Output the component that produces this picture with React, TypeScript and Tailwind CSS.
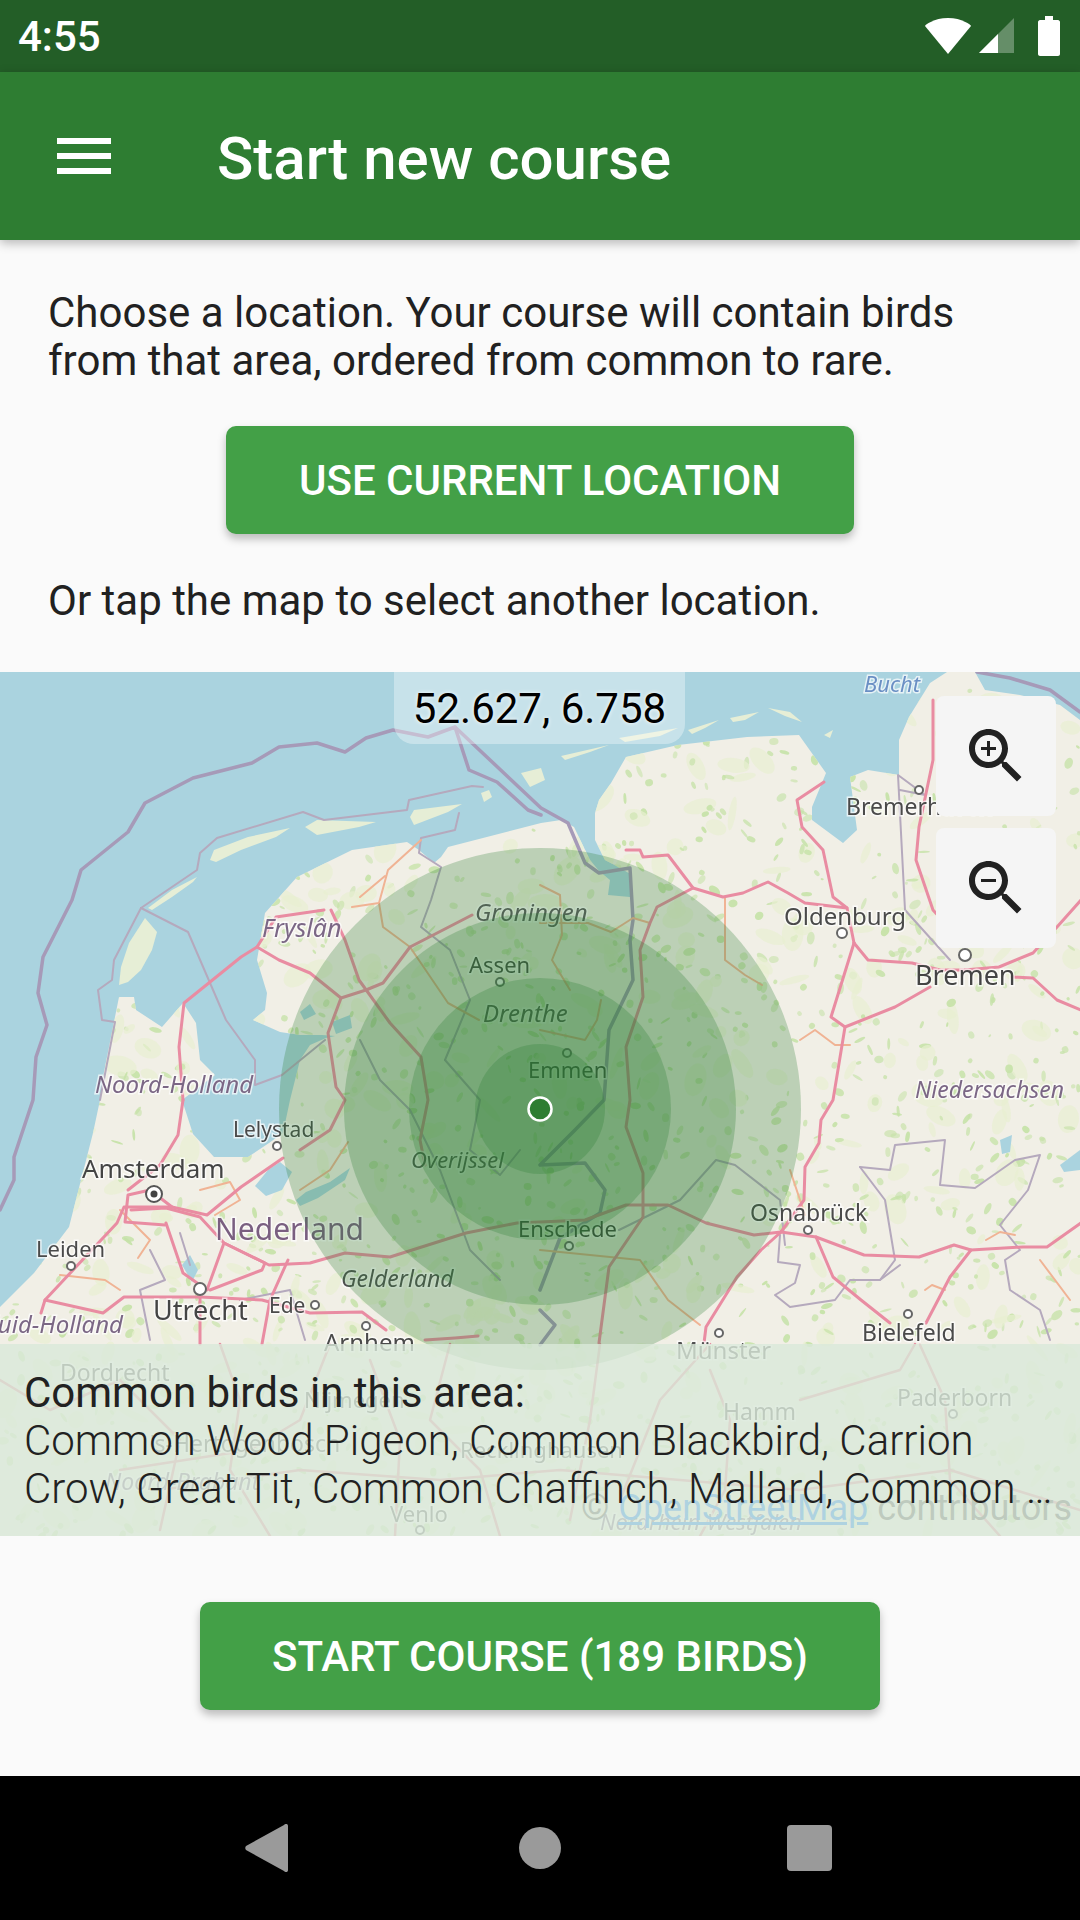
import type { ReactNode } from 'react'

// OSM-ish base map, all coords are page pixels (viewBox starts at the map's top)
const LAND =
  '0,1307 34,1273 69,1227 93,1133 100,1100 103,1077 119,997 134,997 136,1010 162,1027 183,1003 196,1023 200,1060 215,1075 182,1100 193,1134 214,1157 248,1157 269,1143 283,1133 290,1100 300,1060 310,1045 326,1038 335,1036 322,1035 300,1035 280,1032 253,1020 265,1010 267,993 257,960 265,913 297,877 352,850 407,842 419,850 434,863 441,857 448,847 541,823 561,820 574,827 590,860 600,872 610,880 608,895 630,897 632,875 620,868 605,860 595,840 595,813 599,800 611,783 626,757 678,745 747,737 799,735 826,773 812,807 812,820 843,843 857,830 850,777 868,770 899,775 899,740 909,717 930,683 947,672 975,672 985,690 1020,695 1060,705 1080,720 1080,1536 0,1536'

const ISLANDS = [
  '119,985 121,967 129,943 145,918 157,932 152,950 141,970 128,982',
  '148,908 172,890 197,877 193,882 172,897 152,910',
  '210,860 214,850 248,837 290,828 276,837 241,850 216,862',
  '305,827 317,820 376,822 359,827 317,835',
  '410,817 414,810 462,804 448,812 414,825',
  '481,793 489,790 492,797 484,802',
  '521,773 541,768 545,780 530,787',
  '561,756 609,745 590,752 565,760',
  '619,738 678,728 660,736 625,742',
  '688,730 719,720 705,728 692,734',
  '730,718 759,712 745,720 733,722',
  '768,708 790,712 802,722 785,716',
  '824,735 833,730 830,738',
]

const WATER = [
  '268,1170 280,1162 292,1172 282,1190 266,1196 255,1186',
  '296,1200 306,1192 330,1182 350,1168 345,1180 318,1198 300,1206',
  '182,1265 190,1255 198,1270 192,1282',
  '1000,1140 1012,1135 1010,1152 1002,1154',
  '1060,1165 1080,1150 1080,1170 1064,1172',
  '332,1022 350,1015 352,1028 336,1034',
  '300,1012 310,1004 316,1014 304,1020',
]

const MOTORWAYS = [
  '183,1100 179,1047 184,1003 241,957 257,947 279,960 310,973 341,998 366,990 383,983 410,947 472,915',
  '257,947 276,917 324,910',
  '331,910 345,940 359,980 390,1023 421,1057 428,1100 420,1140 425,1165',
  '341,998 328,1033 336,1087 345,1100 330,1130 300,1150',
  '626,850 640,850 643,857 668,855 693,888 723,897 743,893 768,882 788,893 805,903 847,908 854,943',
  '693,888 657,907 650,923 640,950 643,997 626,1047 630,1100 626,1127 643,1173 643,1217 609,1267 599,1343',
  '824,782 797,800 802,827 823,850 833,897 847,908',
  '854,943 868,960 912,963 940,970 964,970 999,967 1033,953 1057,927 1081,900',
  '854,943 831,1017 845,1027 895,1007 930,987',
  '845,1027 833,1100 821,1120 819,1143 805,1167 804,1200 781,1232 761,1250 737,1277 706,1327 704,1343',
  '933,700 933,760 919,827 916,860 933,910 965,945',
  '1012,977 1033,978 1057,1000 1081,1010',
  '781,1232 754,1235 706,1223 668,1205 626,1205 585,1220 517,1223 466,1233 390,1257 345,1253 310,1263 269,1265 224,1243 200,1217 166,1208 131,1210',
  '781,1232 816,1237 864,1255 919,1257 954,1245 971,1250 1023,1247 1047,1247 1081,1223',
  '816,1237 833,1277 861,1300 890,1323',
  '971,1250 950,1277 926,1323',
  '283,1158 241,1187 207,1215 172,1207 124,1207 117,1223 45,1300 41,1313',
  '166,1223 183,1273 207,1290 224,1243 265,1263 262,1270 210,1290',
  '45,1300 103,1313 124,1297 200,1297 262,1300 310,1313 362,1312 386,1330',
  '200,1297 200,1344',
  '183,1100 178,1135 160,1165 128,1190',
  '172,1207 150,1190 128,1195 125,1222 165,1225',
  '288,1260 270,1300 262,1344',
  '425,1340 455,1338 478,1336',
]

const PRIMARY = [
  '352,907 379,903 388,870 421,840',
  '379,903 383,927 410,947 448,1003 479,1020',
  '360,897 385,876',
  '540,923 588,923 611,932 633,918 650,923',
  '540,885 560,895 562,935 552,960 570,990',
  '725,897 725,960 745,975 762,985',
  '540,1030 585,1040 597,1020 601,1000',
  '800,1040 815,1030 835,1045 850,1045',
  '300,1190 330,1170 348,1142',
  '120,1210 150,1240 138,1258',
  '200,1190 230,1182 240,1200 215,1215',
  '60,1275 105,1280 120,1290',
  '790,1170 800,1200 805,1215',
  '986,1240 1000,1232 1015,1235',
  '1040,1260 1070,1300',
  '925,1290 932,1285 945,1290',
  '540,1250 640,1260 668,1300 700,1325',
  '1012,830 1000,850 1000,870',
  '1000,830 1040,832',
]

const BORDERS_THICK = [
  '0,1210 14,1180 14,1157 33,1100 36,1057 47,1025 38,993 43,957 72,900 81,870 128,832 145,803 193,778 252,763 279,747 317,743 345,752 366,738 393,730 428,737 455,727 469,770 497,782 528,810 541,815',
  '455,727 541,808 568,823 585,863 599,873 630,868 633,920 630,940 633,980 609,1030 604,1100 575,1130 540,1165 585,1163 605,1190 600,1213 560,1238 540,1290',
  '540,1310 555,1325 540,1345',
  '977,672 1010,678 1050,690 1080,712',
]

const BORDERS_THIN = [
  '141,908 188,932 226,1020 255,1060 255,1085 282,1075 325,1040',
  '141,908 114,960 112,980 98,990 102,1020 115,1022 100,1100',
  '141,908 197,870 200,853 217,838 303,812 324,820 407,810 409,800 472,786 483,787',
  '459,813 455,830 421,838 419,853 441,867 431,900 421,927 450,950 470,1000 445,1060',
  '445,1060 480,1100 470,1150 500,1175 520,1150',
  '360,1040 380,1080 410,1110 440,1170 470,1250 500,1280',
  '619,1230 680,1200 716,1160 735,1165 780,1200 785,1245',
  '780,1235 778,1262 800,1265 795,1283 775,1295 790,1307 835,1300 850,1280 880,1280 900,1265',
  '860,1167 890,1170 895,1145 945,1140 940,1185 975,1188 1015,1160 1040,1155 1028,1190 1000,1225 1020,1250 1005,1260 1010,1290 1040,1310 1050,1340',
  '860,1167 885,1200 895,1260 880,1280',
  '900,790 925,795 898,775 905,910 950,960',
  '150,1250 165,1280 140,1290 150,1340',
  '240,1300 290,1290 305,1340',
  '180,1233 190,1265',
]

// Everything under the translucent list panel
const FAINT_ROADS = [
  '0,1380 50,1410 120,1380 180,1440 160,1530',
  '220,1344 240,1400 230,1470 270,1536',
  '330,1344 300,1420 250,1450 120,1470',
  '370,1360 400,1440 395,1536',
  '450,1344 430,1420 480,1470 500,1536',
  '600,1344 590,1420 570,1520',
  '710,1344 660,1400 620,1500',
  '710,1370 730,1420 725,1490 700,1536',
  '800,1400 900,1370 915,1344',
  '920,1345 945,1400 950,1480 1000,1536',
  '160,1490 300,1470 440,1480 560,1470 800,1490 950,1470 1080,1510',
]

const LABELS: { t: string; x: number; y: number; s: number; c: string; i?: boolean; e?: boolean }[] = [
  { t: 'Bucht', x: 864, y: 692, s: 22, c: '#6a8fc4', i: true },
  { t: 'Fryslân', x: 262, y: 937, s: 25, c: '#7b6785', i: true },
  { t: 'Groningen', x: 475, y: 921, s: 24, c: '#5f5a60', i: true },
  { t: 'Assen', x: 469, y: 973, s: 22, c: '#454545' },
  { t: 'Drenthe', x: 483, y: 1022, s: 24, c: '#505050', i: true },
  { t: 'Emmen', x: 528, y: 1078, s: 22, c: '#3c3c3c' },
  { t: 'Noord-Holland', x: 95, y: 1093, s: 24, c: '#7b6785', i: true },
  { t: 'Lelystad', x: 233, y: 1137, s: 21, c: '#4a4a4a' },
  { t: 'Overijssel', x: 411, y: 1168, s: 22, c: '#505050', i: true },
  { t: 'Amsterdam', x: 82, y: 1178, s: 26, c: '#444444' },
  { t: 'Nederland', x: 215, y: 1240, s: 30, c: '#7a5f80' },
  { t: 'Enschede', x: 518, y: 1237, s: 22, c: '#3c3c3c' },
  { t: 'Leiden', x: 36, y: 1257, s: 22, c: '#4a4a4a' },
  { t: 'Gelderland', x: 341, y: 1287, s: 23, c: '#505050', i: true },
  { t: 'Zuid-Holland', x: 123, y: 1333, s: 24, c: '#7b6785', i: true, e: true },
  { t: 'Utrecht', x: 153, y: 1320, s: 27, c: '#444444' },
  { t: 'Ede', x: 269, y: 1313, s: 21, c: '#4a4a4a' },
  { t: 'Arnhem', x: 324, y: 1351, s: 24, c: '#4a4a4a' },
  { t: 'Oldenburg', x: 784, y: 925, s: 24, c: '#4a4a4a' },
  { t: 'Bremerhaven', x: 846, y: 815, s: 23, c: '#4a4a4a' },
  { t: 'Bremen', x: 915, y: 985, s: 27, c: '#444444' },
  { t: 'Niedersachsen', x: 915, y: 1098, s: 23, c: '#7b6785', i: true },
  { t: 'Osnabrück', x: 750, y: 1221, s: 23, c: '#4a4a4a' },
  { t: 'Bielefeld', x: 862, y: 1341, s: 23, c: '#4a4a4a' },
  { t: 'Münster', x: 676, y: 1359, s: 24, c: '#505050' },
  { t: 'Dordrecht', x: 60, y: 1381, s: 23, c: '#505050' },
  { t: 'Nijmegen', x: 304, y: 1408, s: 22, c: '#505050' },
  { t: "'s-Hertogenbosch", x: 150, y: 1452, s: 23, c: '#505050' },
  { t: 'Noord-Brabant', x: 105, y: 1490, s: 23, c: '#7b6785', i: true },
  { t: 'Venlo', x: 390, y: 1522, s: 22, c: '#505050' },
  { t: 'Hamm', x: 723, y: 1420, s: 23, c: '#505050' },
  { t: 'Paderborn', x: 897, y: 1406, s: 23, c: '#505050' },
  { t: 'Recklinghausen', x: 460, y: 1458, s: 22, c: '#505050' },
  { t: 'Nordrhein-Westfalen', x: 600, y: 1530, s: 22, c: '#7b6785', i: true },
]

const PLACES: [number, number, number][] = [
  [500, 982, 4], [567, 1053, 4], [842, 933, 5], [919, 790, 4], [965, 955, 6], [277, 1146, 4], [71, 1266, 4],
  [200, 1289, 6], [315, 1305, 4], [366, 1326, 4], [569, 1246, 4], [808, 1230, 4], [719, 1333, 4], [908, 1314, 4],
  [953, 1414, 4], [420, 1530, 4],
]

// fixed seed, the mottled farmland/forest patches only need to look scattered
function makePatches() {
  let seed = 1337
  const rnd = () => {
    seed = (seed * 16807) % 2147483647
    return seed / 2147483647
  }
  const out: { x: number; y: number; rx: number; ry: number; a: number; c: string; o: number }[] = []
  for (let i = 0; i < 2200; i++) {
    const small = i % 4 !== 0
    out.push({
      x: rnd() * 1080,
      y: 680 + rnd() * 856,
      rx: small ? 1.5 + rnd() * 5 : 5 + rnd() * 12,
      ry: small ? 1 + rnd() * 3 : 3 + rnd() * 8,
      a: rnd() * 180,
      c: small ? '#c6e2a8' : '#e8f0d2',
      o: small ? 0.55 + rnd() * 0.4 : 0.7,
    })
  }
  return out
}

function MapArt() {
  const patches = makePatches()
  return (
    <svg className="absolute inset-0 h-full w-full blur-[0.7px]" viewBox="0 672 1080 864">
      <defs>
        <clipPath id="land">
          <polygon points={LAND} />
        </clipPath>
      </defs>
      <rect x="0" y="672" width="1080" height="864" fill="#aad3df" />
      <polygon points={LAND} fill="#f1efe6" />
      {ISLANDS.map(p => (
        <polygon key={p} points={p} fill="#e6eed6" />
      ))}
      <g clipPath="url(#land)">
        {patches.map((p, i) => (
          <ellipse
            key={i}
            cx={p.x}
            cy={p.y}
            rx={p.rx}
            ry={p.ry}
            fill={p.c}
            opacity={p.o}
            transform={`rotate(${p.a} ${p.x} ${p.y})`}
          />
        ))}
      </g>
      {WATER.map(p => (
        <polygon key={p} points={p} fill="#aad3df" />
      ))}
      <g fill="none" strokeLinejoin="round" strokeLinecap="round">
        {BORDERS_THIN.map(p => (
          <polyline key={p} points={p} stroke="#b5a9bd" strokeWidth="2" />
        ))}
        {BORDERS_THICK.map(p => (
          <polyline key={p} points={p} stroke="#a69ab8" strokeWidth="3.5" />
        ))}
        {PRIMARY.map(p => (
          <polyline key={p} points={p} stroke="#f0b394" strokeWidth="2" />
        ))}
        {MOTORWAYS.map(p => (
          <polyline key={p} points={p} stroke="#e98ca2" strokeWidth="3" />
        ))}
        {FAINT_ROADS.map(p => (
          <polyline key={p} points={p} stroke="#e58fa0" strokeWidth="2.5" />
        ))}
      </g>
      {PLACES.map(([x, y, r]) => (
        <circle key={`${x}-${y}`} cx={x} cy={y} r={r} fill="#fff" stroke="#666" strokeWidth="2" />
      ))}
      <circle cx="154" cy="1194" r="8" fill="#fff" stroke="#555" strokeWidth="2" />
      <circle cx="154" cy="1194" r="3.5" fill="#444" />
      {LABELS.map(l => (
        <text
          key={l.t}
          x={l.x}
          y={l.y}
          fontSize={l.s}
          fontFamily="'Noto Sans', sans-serif"
          fontStyle={l.i ? 'italic' : 'normal'}
          textAnchor={l.e ? 'end' : 'start'}
          fill={l.c}
          stroke="#ffffff"
          strokeOpacity="0.7"
          strokeWidth="3"
          paintOrder="stroke"
        >
          {l.t}
        </text>
      ))}
      <g fill="#2e7d32" fillOpacity="0.27">
        <circle cx="540" cy="1109" r="261" />
        <circle cx="540" cy="1109" r="196" />
        <circle cx="540" cy="1109" r="131" />
        <circle cx="540" cy="1109" r="65" />
      </g>
      <circle cx="540" cy="1109" r="11.5" fill="#2e7d32" stroke="#ffffff" strokeWidth="2.5" />
    </svg>
  )
}

function ZoomButton({ children }: { children: ReactNode }) {
  return (
    <button className="flex h-[120px] w-[120px] items-center justify-center rounded-[8px] bg-[#f5f5f5]">
      <svg width="72" height="72" viewBox="0 0 24 24" fill="#212121">
        <path d="M15.5 14h-.79l-.28-.27C15.41 12.59 16 11.11 16 9.5 16 5.91 13.09 3 9.5 3S3 5.91 3 9.5 5.91 16 9.5 16c1.61 0 3.09-.59 4.23-1.57l.27.28v.79l5 4.99L20.49 19l-4.99-5zm-6 0C7.01 14 5 11.99 5 9.5S7.01 5 9.5 5 14 7.01 14 9.5 11.99 14 9.5 14z" />
        {children}
      </svg>
    </button>
  )
}

function StatusBar() {
  return (
    <div className="flex h-[72px] items-center justify-between bg-[#235e27] pl-[18px] pr-[20px] text-white">
      <span className="pt-[2px] text-[42px] font-medium leading-none">4:55</span>
      <div className="flex items-center">
        <svg width="48" height="38" viewBox="0 0 48 38" fill="#fff">
          <path d="M24 37 1 9C1 8 10 1 24 1s23 7 23 8L24 37z" />
        </svg>
        <svg className="ml-[7px]" width="35" height="36" viewBox="0 0 35 36">
          <path d="M0 35 35 0v35z" fill="#fff" fillOpacity="0.3" />
          <path d="M0 35 19 16v19z" fill="#fff" />
        </svg>
        <svg className="ml-[24px]" width="22" height="40" viewBox="0 0 22 40" fill="#fff">
          <path d="M7 0h8v4h5c1 0 2 1 2 2v32c0 1-1 2-2 2H2c-1 0-2-1-2-2V6c0-1 1-2 2-2h5z" />
        </svg>
      </div>
    </div>
  )
}

function AppBar() {
  return (
    <div className="relative z-10 flex h-[168px] items-center bg-[#2e7d32] pl-[57px] shadow-[0_3px_10px_rgba(0,0,0,0.28)]">
      <svg width="54" height="36" viewBox="0 0 54 36" fill="#fff">
        <rect width="54" height="6" />
        <rect y="15" width="54" height="6" />
        <rect y="30" width="54" height="6" />
      </svg>
      <h1 className="ml-[106px] pt-[5px] text-[60px] font-medium leading-none text-white">Start new course</h1>
    </div>
  )
}

function GreenButton({ label, width }: { label: string; width: string }) {
  return (
    <button
      className={`flex h-[108px] items-center justify-center rounded-[10px] bg-[#43a047] text-[42px] font-medium text-white shadow-[0_5px_8px_rgba(0,0,0,0.25)] ${width}`}
    >
      {label}
    </button>
  )
}

function NavBar() {
  return (
    <div className="flex h-[144px] items-center bg-black pl-[245px]">
      <svg width="43" height="48" viewBox="0 0 43 48" fill="#9a9a9a">
        <path d="M39 1c2-2 4-1 4 1v44c0 2-2 3-4 1L1 26c-1-1-1-3 0-4L39 1z" />
      </svg>
      <div className="ml-[231px] h-[42px] w-[42px] rounded-full bg-[#9a9a9a]" />
      <div className="ml-[226px] h-[46px] w-[45px] rounded-[4px] bg-[#9a9a9a]" />
    </div>
  )
}

export default function App() {
  return (
    <div className="flex h-[1920px] w-[1080px] flex-col overflow-hidden bg-[#fafafa] font-[Roboto,sans-serif] text-[#212121]">
      <StatusBar />
      <AppBar />

      <div className="flex h-[432px] flex-col px-[48px]">
        <p className="mt-[49px] text-[42px] leading-[48px]">
          Choose a location. Your course will contain birds
          <br />
          from that area, ordered from common to rare.
        </p>
        <div className="mt-[41px] flex justify-center">
          <GreenButton label="USE CURRENT LOCATION" width="w-[628px]" />
        </div>
        <p className="mt-[43px] text-[42px] leading-[48px]">Or tap the map to select another location.</p>
      </div>

      {/* Map */}
      <div className="relative h-[864px] overflow-hidden">
        <MapArt />

        <div className="absolute bottom-[4px] right-[8px] whitespace-nowrap text-[36px] leading-[48px] text-[#505050]">
          © <span className="text-[#0078fa] underline">OpenStreetMap</span> contributors
        </div>

        <div className="absolute left-[394px] top-0 flex h-[72px] w-[291px] items-center justify-center rounded-b-[20px] bg-white/35 text-[42px] text-black [text-shadow:0_0_4px_#fff]">
          52.627, 6.758
        </div>

        <div className="absolute right-[24px] top-[24px] flex flex-col gap-[12px]">
          <ZoomButton>
            <path d="M12 10h-2v2H9v-2H7V9h2V7h1v2h2v1z" />
          </ZoomButton>
          <ZoomButton>
            <path d="M7 9h5v1H7z" />
          </ZoomButton>
        </div>

        <div className="absolute inset-x-0 bottom-0 h-[192px] whitespace-nowrap bg-[#d9e8da]/80 px-[24px] pb-[23px] pt-[25px] text-[42px] leading-[48px]">
          <div>Common birds in this area:</div>
          <div className="font-light">Common Wood Pigeon, Common Blackbird, Carrion</div>
          <div className="font-light">Crow, Great Tit, Common Chaffinch, Mallard, Common …</div>
        </div>
      </div>

      <div className="flex h-[240px] items-center justify-center">
        <GreenButton label="START COURSE (189 BIRDS)" width="w-[680px]" />
      </div>

      <NavBar />
    </div>
  )
}
